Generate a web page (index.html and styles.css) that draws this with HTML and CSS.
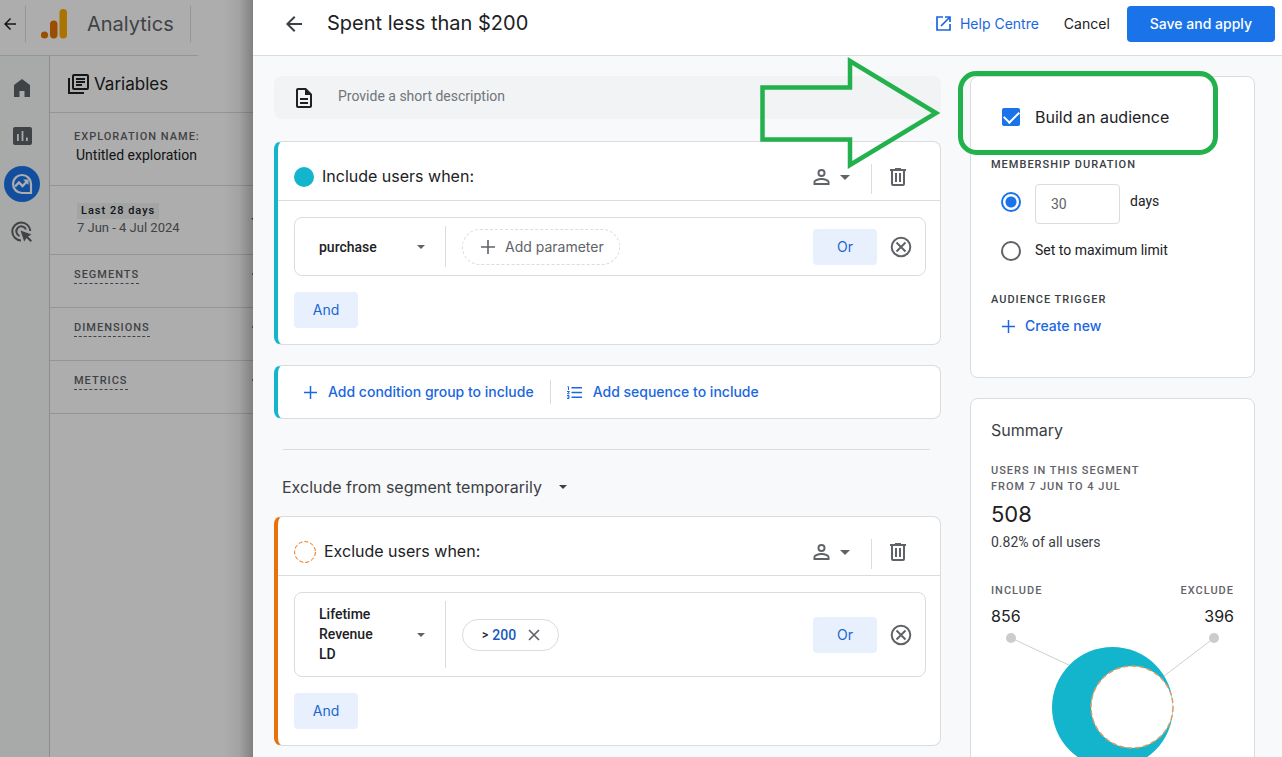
FILE: index.html
```html
<!DOCTYPE html>
<html lang="en-GB">
<head>
<meta charset="utf-8">
<meta name="viewport" content="width=device-width, initial-scale=1">
<title>Analytics – Spent less than $200</title>
<link rel="stylesheet" href="styles.css">
</head>
<body>
<svg class="sprite" aria-hidden="true">
  <symbol id="back" viewBox="0 0 24 24"><path d="M20 11H7.83l5.59-5.59L12 4l-8 8 8 8 1.41-1.41L7.83 13H20z"/></symbol>
  <symbol id="caret" viewBox="0 0 10 5"><path d="M0 0h10L5 5z"/></symbol>
  <symbol id="plus" viewBox="0 0 14 14"><path d="M6.2 0h1.6v6.2H14v1.6H7.8V14H6.2V7.800H0V6.200h6.200z"/></symbol>
  <symbol id="person" viewBox="4 4 16 16"><path d="M12 5.900a2.100 2.100 0 1 1 0 4.200 2.100 2.100 0 0 1 0-4.200m0 9c2.970 0 6.100 1.460 6.100 2.100v1.100H5.900V17c0-.640 3.130-2.100 6.100-2.100M12 4a4 4 0 1 0 0 8 4 4 0 0 0 0-8zm0 9c-2.670 0-8 1.340-8 4v3h16v-3c0-2.660-5.330-4-8-4z"/></symbol>
  <symbol id="trash" viewBox="0 0 16 18"><path fill-rule="evenodd" d="M5 0h6v1h5v2h-1v13a2 2 0 0 1-2 2H3a2 2 0 0 1-2-2V3H0V1h5zM3 3v13h10V3zm2 2h2v9H5zm4 0h2v9H9z"/></symbol>
  <symbol id="remove" viewBox="0 0 22 22"><g fill="none" stroke="currentColor" stroke-width="2"><circle cx="11" cy="11" r="9.300"/><path d="M6.500 6.500l9 9m0-9l-9 9"/></g></symbol>
</svg>

<div class="shell">
  <section class="app" aria-label="Exploration">
    <header class="app-bar">
      <svg class="app-back" viewBox="4 4 16 16"><use href="#back" x="0" y="0" width="24" height="24"/></svg>
      <span class="app-rule"></span>
      <svg class="logo" viewBox="0 0 26 30"><circle cx="3.500" cy="26" r="3.600" fill="#e37400"/><rect x="9" y="11.500" width="7.500" height="18" rx="3.700" fill="#e37400"/><rect x="18.500" y="0" width="7.500" height="29.500" rx="3.700" fill="#f9ab00"/></svg>
      <span class="app-name">Analytics</span>
      <span class="app-rule app-rule-end"></span>
    </header>
    <div class="app-body">
      <nav class="rail" aria-label="Main">
        <a href="#" class="rail-item" aria-label="Home"><svg width="16" height="18" viewBox="0 0 16 18"><path d="M8 0l8 6v12h-5.500v-6h-5v6H0V6z"/></svg></a>
        <a href="#" class="rail-item" aria-label="Reports"><svg width="19" height="18" viewBox="0 0 19 18"><path fill-rule="evenodd" d="M2 0h15a2 2 0 0 1 2 2v14a2 2 0 0 1-2 2H2a2 2 0 0 1-2-2V2a2 2 0 0 1 2-2zm2 7v7h1.800V7zm4.600-3v10h1.800V4zM13 10.500V14h1.800v-3.500z"/></svg></a>
        <a href="#" class="rail-item rail-active" aria-label="Explore"><svg width="22" height="22" viewBox="0 0 22 22"><path fill="none" stroke="#fff" stroke-width="2.200" d="M11 2a9 9 0 0 0 0 18h9v-9a9 9 0 0 0-9-9z"/><path fill="none" stroke="#fff" stroke-width="2.400" d="M4 13.500l4-4 3.500 3.500L16 8.500"/><path fill="#fff" d="M12 6.500h5.500V12z"/></svg></a>
        <a href="#" class="rail-item" aria-label="Advertising"><svg width="22" height="22" viewBox="0 0 22 22"><g fill="none" stroke="currentColor" stroke-width="2"><path d="M10 19.500A9 9 0 1 1 19.300 10"/><path d="M8.500 15A5 5 0 1 1 15 8.500"/></g><path d="M9.500 9.500l11 4-3.500 2 4 4-1.500 1.500-4-4-2.300 3.500z"/></svg></a>
      </nav>
      <div class="variables">
        <h2 class="var-title"><svg width="21" height="20" viewBox="0 0 21 20"><g fill="none" stroke="currentColor" stroke-width="2"><path d="M1 4v15h15"/><rect x="5" y="1" width="15" height="14" rx="1"/><path d="M8 5h9M8 8h9M8 11h6"/></g></svg>Variables</h2>
        <div class="var-block">
          <div class="label label-grey">EXPLORATION NAME:</div>
          <div class="var-name">Untitled exploration</div>
        </div>
        <div class="var-block var-date">
          <div><span class="chip-date">Last 28 days</span><div class="date-range">7 Jun - 4 Jul 2024</div></div>
          <svg class="var-caret" width="10" height="5"><use href="#caret"/></svg>
        </div>
        <div class="var-row"><span class="label label-grey dashed">SEGMENTS</span><svg class="var-add" width="14" height="14"><use href="#plus"/></svg></div>
        <div class="var-row"><span class="label label-grey dashed">DIMENSIONS</span><svg class="var-add" width="14" height="14"><use href="#plus"/></svg></div>
        <div class="var-row"><span class="label label-grey dashed">METRICS</span><svg class="var-add" width="14" height="14"><use href="#plus"/></svg></div>
      </div>
    </div>
    <div class="scrim"></div>
  </section>

  <main class="dialog">
    <header class="dialog-bar">
      <button class="icon-btn" aria-label="Back"><svg width="24" height="24"><use href="#back"/></svg></button>
      <h1 class="dialog-title">Spent less than $200</h1>
      <a href="#" class="help"><svg width="15" height="15" viewBox="0 0 15 15"><path fill="none" stroke="currentColor" stroke-width="1.700" d="M7 1H1v13h13V8M9 1h5v5M14 1L5 10"/></svg>Help Centre</a>
      <button class="cancel">Cancel</button>
      <button class="save">Save and apply</button>
    </header>

    <div class="dialog-body">
      <div class="builder">
        <label class="description">
          <svg width="24" height="24" viewBox="0 0 24 24"><path d="M8 16h8v2H8zm0-4h8v2H8zm6-10H6c-1.100 0-2 .9-2 2v16c0 1.100.89 2 1.990 2H18c1.100 0 2-.9 2-2V8zm4 18H6V4h7v5h5z"/></svg>
          <input type="text" placeholder="Provide a short description" aria-label="Description">
        </label>

        <section class="group include">
          <header class="group-head">
            <span class="dot"></span>
            <h2>Include users when:</h2>
            <button class="scope" aria-label="User scope"><svg width="17" height="16"><use href="#person"/></svg><svg width="10" height="5"><use href="#caret"/></svg></button>
            <span class="rule"></span>
            <button class="icon-btn" aria-label="Delete group"><svg width="16" height="18"><use href="#trash"/></svg></button>
          </header>
          <div class="group-body">
            <div class="condition">
              <div class="pick"><select class="pick-select" aria-label="Event"><option>purchase</option></select><svg width="8" height="4"><use href="#caret"/></svg></div>
              <button class="param"><svg width="14" height="14"><use href="#plus"/></svg>Add parameter</button>
              <button class="tonal or">Or</button>
              <button class="icon-btn" aria-label="Remove condition"><svg width="22" height="22"><use href="#remove"/></svg></button>
            </div>
            <button class="tonal">And</button>
          </div>
        </section>

        <section class="group include adders">
          <button class="link-btn"><svg width="13" height="13"><use href="#plus"/></svg>Add condition group to include</button>
          <span class="rule"></span>
          <button class="link-btn"><svg width="15" height="13" viewBox="0 0 15 13"><path d="M4.500 1H15v1.400H4.500zm0 4.800H15v1.400H4.500zm0 4.800H15V12H4.500z"/><path fill="none" stroke="currentColor" d="M.5 0.700h1V4M0 5.500h2.500L.5 7.800h2M0 9.500h2v3H0M.5 11H2"/></svg>Add sequence to include</button>
        </section>

        <hr class="divider">
        <div class="exclude-mode">
          <select aria-label="Exclusion type"><option>Exclude from segment temporarily</option></select><svg width="8" height="4"><use href="#caret"/></svg>
        </div>

        <section class="group exclude">
          <header class="group-head">
            <svg class="ring" width="22" height="22"><circle cx="11" cy="11" r="10.400"/></svg>
            <h2>Exclude users when:</h2>
            <button class="scope" aria-label="User scope"><svg width="17" height="16"><use href="#person"/></svg><svg width="10" height="5"><use href="#caret"/></svg></button>
            <span class="rule"></span>
            <button class="icon-btn" aria-label="Delete group"><svg width="16" height="18"><use href="#trash"/></svg></button>
          </header>
          <div class="group-body">
            <div class="condition">
              <button class="pick" aria-haspopup="listbox"><span class="pick-text">Lifetime Revenue LD</span><svg width="8" height="4"><use href="#caret"/></svg></button>
              <span class="filter"><span class="op">&gt;</span><a href="#">200</a><button class="icon-btn" aria-label="Remove filter"><svg width="12" height="12" viewBox="0 0 12 12"><path fill="none" stroke="currentColor" stroke-width="1.700" d="M1 1l10 10M11 1L1 11"/></svg></button></span>
              <button class="tonal or">Or</button>
              <button class="icon-btn" aria-label="Remove condition"><svg width="22" height="22"><use href="#remove"/></svg></button>
            </div>
            <button class="tonal">And</button>
          </div>
        </section>
      </div>

      <aside class="side">
        <section class="card audience">
          <label class="build"><input type="checkbox" checked><span>Build an audience</span></label>
          <h3 class="label">MEMBERSHIP DURATION</h3>
          <div class="days">
            <input type="radio" name="duration" checked aria-label="Number of days">
            <input class="days-box" type="text" value="30" aria-label="Days">
            <span>days</span>
          </div>
          <label class="maximum"><input type="radio" name="duration"><span>Set to maximum limit</span></label>
          <h3 class="label">AUDIENCE TRIGGER</h3>
          <button class="link-btn create"><svg width="13" height="13"><use href="#plus"/></svg>Create new</button>
        </section>

        <section class="card summary">
          <h2>Summary</h2>
          <div class="label label-grey">USERS IN THIS SEGMENT<br>FROM 7 JUN TO 4 JUL</div>
          <div class="total">508</div>
          <div class="share">0.82% of all users</div>
          <div class="split">
            <div><div class="label label-grey">INCLUDE</div><div class="count">856</div></div>
            <div class="split-end"><div class="label label-grey">EXCLUDE</div><div class="count">396</div></div>
          </div>
          <svg class="venn" viewBox="0 0 243 140" role="img" aria-label="Included and excluded users">
            <path d="M20 8l60 28M223 8l-50 38" stroke="#cfcfcf" fill="none"/>
            <circle cx="20" cy="8" r="5" fill="#ccc"/><circle cx="223" cy="8" r="5" fill="#ccc"/>
            <circle cx="121.500" cy="77.500" r="60.500" fill="#12b5cb"/>
            <circle cx="141" cy="77" r="41" fill="#fff" stroke="#df9a60" stroke-width="1.500" stroke-dasharray="5 3"/>
          </svg>
        </section>
      </aside>
    </div>
  </main>
</div>

<svg class="callouts" width="480" height="120" viewBox="0 0 480 120" aria-hidden="true">
  <g fill="none" stroke="#22b14c">
    <path stroke-width="4.500" d="M22.500 37.500H110V11l86 52-86 52V89.500H22.500z"/>
    <rect x="220.500" y="23.500" width="255" height="79" rx="16" stroke-width="5"/>
  </g>
</svg>
</body>
</html>
```
FILE: styles.css
```css
* { box-sizing: border-box; }
body {
  margin: 0;
  font: 14px/20px Roboto, "Liberation Sans", sans-serif;
  color: #202124;
  position: relative;
}
h1, h2, h3 { margin: 0; font-weight: 400; }
button, input, select { font: inherit; color: inherit; }
button { border: 0; background: none; padding: 0; cursor: pointer; }
a { text-decoration: none; color: inherit; }
svg { display: block; flex: none; fill: currentColor; }
.sprite { position: absolute; width: 0; height: 0; }

.shell {
  display: grid;
  grid-template-columns: 253px 1fr;
  height: 100vh;
  overflow: hidden;
}
.label { font-size: 11px; font-weight: 500; line-height: 16px; letter-spacing: 1px; color: #3c4043; }
.label-grey { color: #5f6368; }

/* Page behind the dialog */
.app { position: relative; display: flex; flex-direction: column; overflow: hidden; background: #fff; }
.app-bar { display: flex; align-items: center; height: 56px; width: 198px; padding: 0 0 7px 4px; border-bottom: 1px solid #dadce0; }
.app-back { width: 12px; height: 12px; }
.app-rule { width: 1px; height: 36px; margin-left: 9px; background: #dadce0; }
.logo { width: 26px; height: 30px; margin-left: 15px; }
.app-name { margin-left: 20px; font: 20px/28px Inter, sans-serif; color: #5f6368; }
.app-rule-end { margin-left: auto; margin-right: 7px; }
.app-body { display: flex; flex: 1; }
.rail { width: 50px; display: flex; flex-direction: column; gap: 12px; padding: 14px 0 0 4px; border-right: 1px solid #d0d2d4; background: #f8f9fa; }
.rail-item { width: 36px; height: 36px; display: flex; align-items: center; justify-content: center; border-radius: 50%; color: #5f6368; }
.rail-active { background: #1a73e8; }
.variables { flex: 1; min-width: 0; }
.var-title { display: flex; align-items: center; gap: 5px; height: 57px; padding-left: 18px; font: 17px/24px Inter, sans-serif; border-bottom: 1px solid #dadce0; }
.var-block { height: 73px; padding: 16px 0 0 24px; border-bottom: 1px solid #dadce0; }
.var-name { padding-left: 2px; }
.var-date { display: flex; justify-content: space-between; align-items: center; height: 69px; padding: 0 0 0 27px; }
.chip-date { display: block; width: max-content; padding: 0 4px; background: #f1f3f4; font-size: 11px; font-weight: 500; line-height: 16px; letter-spacing: 1px; }
.date-range { font-size: 13px; line-height: 18px; color: #5f6368; }
.var-caret { margin-right: -8px; color: #5f6368; }
.var-row { display: flex; justify-content: space-between; align-items: flex-start; height: 53px; padding: 12px 0 0 24px; border-bottom: 1px solid #dadce0; }
.var-add { margin-right: -13px; color: #5f6368; }
.dashed { border-bottom: 1px dashed #5f6368; }
.scrim { position: absolute; inset: 0; background: linear-gradient(to left, rgba(0, 0, 0, .26), rgba(0, 0, 0, .06) 14px, transparent 30px), rgba(0, 0, 0, .32); }

/* Segment builder */
.dialog { display: flex; flex-direction: column; min-width: 0; background: #f8f9fb; }
.icon-btn { display: flex; align-items: center; justify-content: center; color: #5f6368; }
.dialog-bar { display: flex; align-items: center; height: 56px; padding: 0 7px 8px 29px; background: #fff; border-bottom: 1px solid #dadce0; font: 14px/20px Inter, sans-serif; flex: none; }
.dialog-bar .icon-btn { color: #3c4043; }
.dialog-title { margin: 0 auto 0 21px; padding-bottom: 2px; font: 20px/28px Inter, sans-serif; }
.help { display: flex; align-items: center; gap: 9px; color: #1a67e0; }
.cancel { margin: 0 17px 0 25px; }
.save { height: 36px; padding: 0 23px; border-radius: 4px; background: #1a73e8; color: #fff; font-weight: 500; }
.dialog-body { display: grid; grid-template-columns: minmax(0, 1fr) 285px; gap: 29px; align-items: start; padding: 20px 27px 0 21px; }

.description { display: flex; align-items: center; gap: 22px; height: 43px; padding-left: 18px; border-radius: 8px; background: #f1f3f4; }
.description input { flex: 1; height: 20px; margin-bottom: 4px; padding: 0; border: 0; outline: 0; background: none; }
.description input::placeholder { color: #70757a; }

.group { margin-top: 20px; border: 1px solid #dadce0; border-left-width: 4px; border-radius: 8px; background: #fff; }
.description + .group { margin-top: 22px; }
.include { border-left-color: #12b5cb; }
.exclude { border-left-color: #e8710a; margin-top: 17px; }
.group-head { display: flex; align-items: center; height: 59px; padding: 12px 34px 0 16px; border-bottom: 1px solid #dadce0; }
.group-head h2 { margin-left: 8px; margin-right: auto; padding-bottom: 2px; font: 16px/24px Inter, sans-serif; }
.dot { width: 20px; height: 20px; border-radius: 50%; background: #12b5cb; }
.ring circle { fill: none; stroke: #e8710a; stroke-dasharray: 4 2; }
.scope { display: flex; align-items: center; gap: 10px; margin-right: 21px; color: #5f6368; }
.rule { width: 1px; height: 30px; background: #dadce0; }
.group-head .rule { align-self: flex-end; margin-bottom: 6px; margin-right: 18px; }
.group-body { padding: 16px 14px 16px 16px; }
.condition { display: flex; align-items: center; margin-bottom: 16px; padding: 8px 13px 8px 0; min-height: 59px; border: 1px solid #dadce0; border-radius: 8px; }
.pick { display: flex; align-items: center; justify-content: space-between; align-self: stretch; width: 151px; padding: 0 20px 0 24px; border-right: 1px solid #dadce0; font-weight: 500; text-align: left; }
.pick svg { color: #5f6368; }
.pick-text { width: 70px; padding: 3px 0 4px; }
.pick-select, .exclude-mode select { appearance: none; border: 0; background: none; padding: 0; outline: 0; }
.param { display: flex; align-items: center; gap: 10px; height: 36px; margin-left: 16px; padding: 0 15px 0 18px; border: 1px dashed #dadce0; border-radius: 18px; color: #5f6368; font: 14px/20px Inter, sans-serif; }
.filter { display: flex; align-items: center; height: 32px; margin-left: 16px; padding: 0 18px 0 19px; border: 1px solid #dadce0; border-radius: 16px; font-weight: 500; }
.filter a { margin: 0 12px 0 4px; color: #185abc; }
.op { font-size: 12px; }
.tonal { display: block; width: 64px; height: 36px; border-radius: 4px; background: #e8f0fe; color: #1967d2; font: 14px/20px Inter, sans-serif; }
.or { margin-left: auto; margin-right: 13px; }
.link-btn { display: flex; align-items: center; gap: 11px; color: #1a67e0; font: 500 14px/20px Inter, sans-serif; }
.adders { display: flex; align-items: center; gap: 16px; height: 54px; padding-left: 26px; }
.adders .rule { height: 24px; }
.divider { margin: 30px 11px 0 9px; border: 0; border-top: 1px solid #dadce0; }
.exclude-mode { display: flex; align-items: center; gap: 17px; height: 24px; margin: 25px 0 0 8px; font: 16px/24px Inter, sans-serif; color: #3c4043; }

/* Side cards */
.side { display: grid; gap: 20px; }
.card { border: 1px solid #dadce0; border-radius: 8px; background: #fff; padding: 0 20px; }
input[type="checkbox"], input[type="radio"] { appearance: none; flex: none; margin: 0; width: 20px; height: 20px; border: 2px solid #5f6368; border-radius: 50%; background: #fff; }
input[type="radio"]:checked { border-color: #1a73e8; background: radial-gradient(circle, #1a73e8 5px, #fff 6px); }
input[type="checkbox"] { display: grid; place-items: center; width: 18px; height: 18px; margin: 0 1px; border: 0; border-radius: 2px; background: #1a73e8; }
input[type="checkbox"]::after { content: ""; width: 13px; height: 7px; margin-bottom: 4px; border: solid #fff; border-width: 0 0 2px 2px; transform: rotate(-45deg); }
.audience { height: 302px; padding-top: 28px; }
.build, .days, .maximum { display: flex; align-items: center; gap: 14px; padding-left: 10px; }
.build { font: 16px/24px Inter, sans-serif; margin-bottom: 28px; }
.days { height: 40px; margin: 11px 0 16px; }
.days input[type="radio"] { margin-bottom: 4px; }
.days-box { width: 85px; height: 40px; padding: 0 15px; border: 1px solid #dadce0; border-radius: 4px; color: #5f6368; outline: 0; }
.days span { margin-left: -4px; padding-bottom: 6px; }
.maximum { margin-bottom: 30px; }
.maximum span { padding-bottom: 2px; }
.create { margin: 8px 0 0 11px; gap: 10px; }
.summary { padding-top: 19px; }
.summary h2 { font: 16px/24px Inter, sans-serif; color: #3c4043; margin-bottom: 21px; }
.total { margin-top: 5px; font: 22px/28px Inter, sans-serif; }
.share { margin-top: 4px; color: #3c4043; }
.split { display: flex; justify-content: space-between; margin-top: 31px; }
.split-end { text-align: right; }
.count { margin-top: 5px; font: 16px/24px Inter, sans-serif; }
.venn { width: 100%; margin-top: 2px; }

/* Highlight marks drawn over the page */
.callouts { position: absolute; left: 740px; top: 50px; pointer-events: none; }
```
